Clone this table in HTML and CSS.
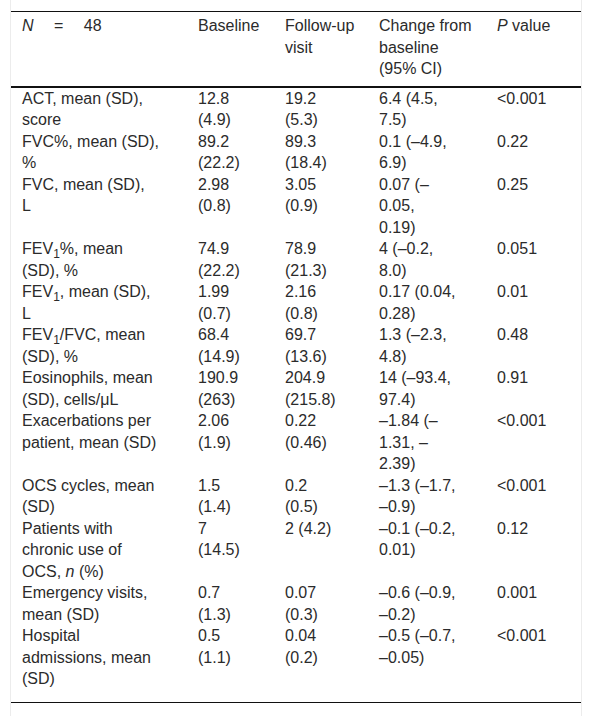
FILE: index.html
```html
<!DOCTYPE html>
<html lang="en">
<head>
    <meta charset="UTF-8">
    <meta name="viewport" content="width=device-width, initial-scale=1.0">
    <title>Outcomes at follow-up</title>
    <link rel="stylesheet" href="styles.css">
</head>
<body>
    <div class="panel">
        <table class="results">
            <colgroup>
                <col class="col-label">
                <col class="col-base">
                <col class="col-follow">
                <col class="col-change">
                <col class="col-p">
            </colgroup>
            <thead>
                <tr>
                    <th class="count"><i>N</i> = 48</th>
                    <th>Baseline</th>
                    <th>Follow-up<br>visit</th>
                    <th>Change from<br>baseline<br>(95% CI)</th>
                    <th><i>P</i> value</th>
                </tr>
            </thead>
            <tbody>
                <tr>
                    <td>ACT, mean (SD),<br>score</td>
                    <td>12.8<br>(4.9)</td>
                    <td>19.2<br>(5.3)</td>
                    <td>6.4 (4.5,<br>7.5)</td>
                    <td>&lt;0.001</td>
                </tr>
                <tr>
                    <td>FVC%, mean (SD),<br>%</td>
                    <td>89.2<br>(22.2)</td>
                    <td>89.3<br>(18.4)</td>
                    <td>0.1 (–4.9,<br>6.9)</td>
                    <td>0.22</td>
                </tr>
                <tr>
                    <td>FVC, mean (SD),<br>L</td>
                    <td>2.98<br>(0.8)</td>
                    <td>3.05<br>(0.9)</td>
                    <td>0.07 (–<br>0.05,<br>0.19)</td>
                    <td>0.25</td>
                </tr>
                <tr>
                    <td>FEV<sub>1</sub>%, mean<br>(SD), %</td>
                    <td>74.9<br>(22.2)</td>
                    <td>78.9<br>(21.3)</td>
                    <td>4 (–0.2,<br>8.0)</td>
                    <td>0.051</td>
                </tr>
                <tr>
                    <td>FEV<sub>1</sub>, mean (SD),<br>L</td>
                    <td>1.99<br>(0.7)</td>
                    <td>2.16<br>(0.8)</td>
                    <td>0.17 (0.04,<br>0.28)</td>
                    <td>0.01</td>
                </tr>
                <tr>
                    <td>FEV<sub>1</sub>/FVC, mean<br>(SD), %</td>
                    <td>68.4<br>(14.9)</td>
                    <td>69.7<br>(13.6)</td>
                    <td>1.3 (–2.3,<br>4.8)</td>
                    <td>0.48</td>
                </tr>
                <tr>
                    <td>Eosinophils, mean<br>(SD), cells/μL</td>
                    <td>190.9<br>(263)</td>
                    <td>204.9<br>(215.8)</td>
                    <td>14 (–93.4,<br>97.4)</td>
                    <td>0.91</td>
                </tr>
                <tr>
                    <td>Exacerbations per<br>patient, mean (SD)</td>
                    <td>2.06<br>(1.9)</td>
                    <td>0.22<br>(0.46)</td>
                    <td>–1.84 (–<br>1.31, –<br>2.39)</td>
                    <td>&lt;0.001</td>
                </tr>
                <tr>
                    <td>OCS cycles, mean<br>(SD)</td>
                    <td>1.5<br>(1.4)</td>
                    <td>0.2<br>(0.5)</td>
                    <td>–1.3 (–1.7,<br>–0.9)</td>
                    <td>&lt;0.001</td>
                </tr>
                <tr>
                    <td>Patients with<br>chronic use of<br>OCS, <i>n</i> (%)</td>
                    <td>7<br>(14.5)</td>
                    <td>2 (4.2)</td>
                    <td>–0.1 (–0.2,<br>0.01)</td>
                    <td>0.12</td>
                </tr>
                <tr>
                    <td>Emergency visits,<br>mean (SD)</td>
                    <td>0.7<br>(1.3)</td>
                    <td>0.07<br>(0.3)</td>
                    <td>–0.6 (–0.9,<br>–0.2)</td>
                    <td>0.001</td>
                </tr>
                <tr>
                    <td>Hospital<br>admissions, mean<br>(SD)</td>
                    <td>0.5<br>(1.1)</td>
                    <td>0.04<br>(0.2)</td>
                    <td>–0.5 (–0.7,<br>–0.05)</td>
                    <td>&lt;0.001</td>
                </tr>
            </tbody>
        </table>
    </div>
</body>
</html>
```

FILE: styles.css
```css
body {
    margin: 0;
    font-family: "Liberation Sans", Arial, sans-serif;
    font-size: 16px;
    line-height: 21.5px;
    color: #2b2b2b;
    background-color: #fff;
}

.panel {
    margin: 0 10px;
    padding-top: 11px;
    min-height: 100vh;
    box-sizing: border-box;
    border-left: 1px solid #ececec;
    border-right: 1px solid #ececec;
}

.results {
    width: 100%;
    table-layout: fixed;
    border-collapse: collapse;
    border-top: 1px solid #111;
    border-bottom: 1px solid #111;
}

.col-label {
    width: 176px;
}

.col-base {
    width: 87px;
}

.col-follow {
    width: 94px;
}

.col-change {
    width: 118px;
}

.results th,
.results td {
    padding: 0 10px 0 11px;
    text-align: left;
    vertical-align: top;
    font-weight: normal;
    white-space: nowrap;
}

.results th {
    padding-top: 3px;
    padding-bottom: 6px;
}

.results thead tr {
    border-bottom: 2px solid #111;
}

.results tbody tr:last-child td {
    padding-bottom: 12px;
}

.results th.count {
    word-spacing: 16px;
}

sub {
    font-size: 0.75em;
    line-height: 0;
    vertical-align: -0.3em;
}
```
